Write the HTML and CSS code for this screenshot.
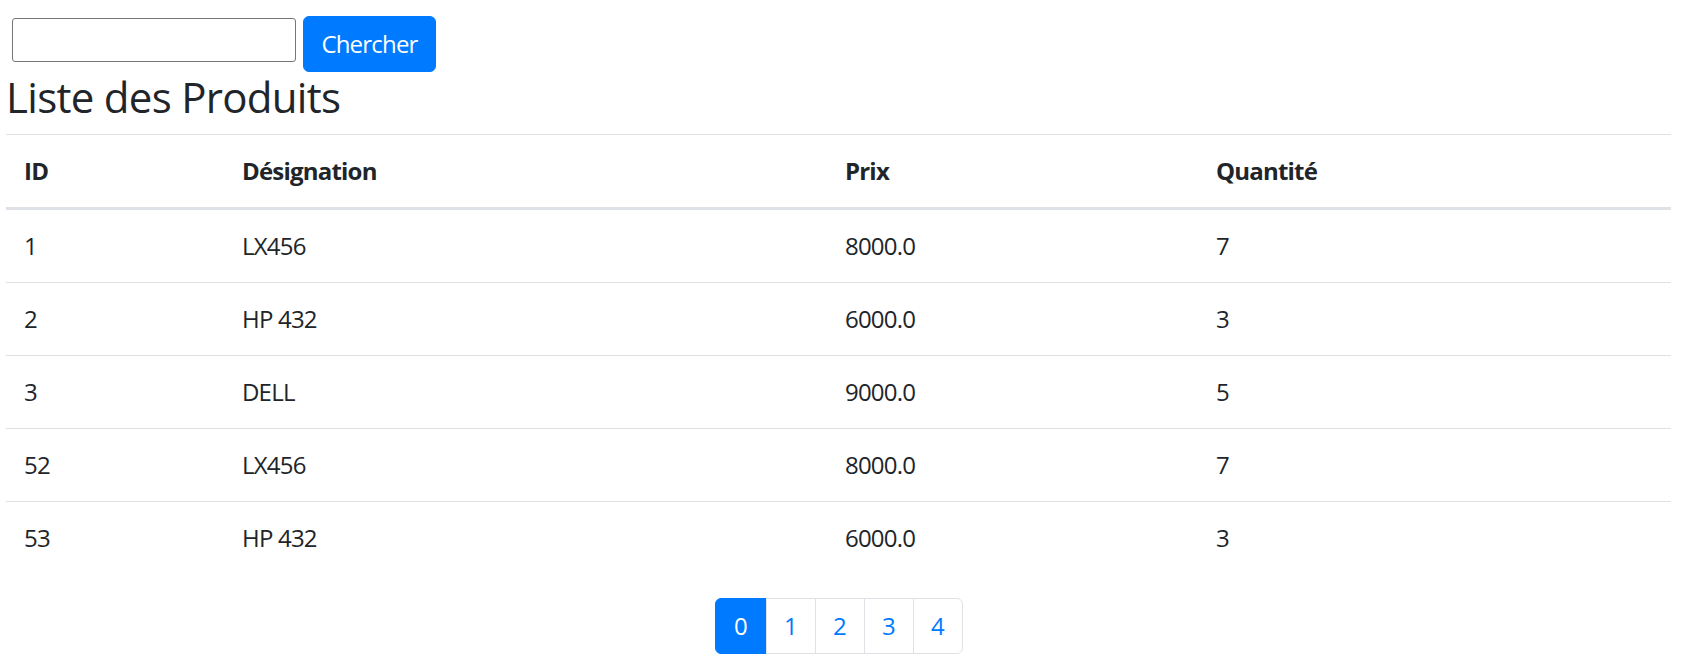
FILE: index.html
```html
<!DOCTYPE html>
<html lang="fr">
<head>
<meta charset="utf-8">
<title>Liste des Produits</title>
<link rel="stylesheet" href="styles.css">
</head>
<body>
<form class="search">
  <input type="text" class="search-input">
  <button type="button" class="btn-primary">Chercher</button>
</form>
<h3 class="title">Liste des Produits</h3>
<table class="table">
  <thead>
    <tr>
      <th class="c-id">ID</th>
      <th class="c-des">Désignation</th>
      <th class="c-prix">Prix</th>
      <th class="c-qte">Quantité</th>
    </tr>
  </thead>
  <tbody>
    <tr><td>1</td><td>LX456</td><td>8000.0</td><td>7</td></tr>
    <tr><td>2</td><td>HP 432</td><td>6000.0</td><td>3</td></tr>
    <tr><td>3</td><td>DELL</td><td>9000.0</td><td>5</td></tr>
    <tr><td>52</td><td>LX456</td><td>8000.0</td><td>7</td></tr>
    <tr><td>53</td><td>HP 432</td><td>6000.0</td><td>3</td></tr>
  </tbody>
</table>
<ul class="pagination">
  <li class="page-item active"><a class="page-link">0</a></li>
  <li class="page-item"><a class="page-link">1</a></li>
  <li class="page-item"><a class="page-link">2</a></li>
  <li class="page-item"><a class="page-link">3</a></li>
  <li class="page-item"><a class="page-link">4</a></li>
</ul>
</body>
</html>
```
FILE: styles.css
```css
* { box-sizing: border-box; }
html, body { margin: 0; padding: 0; background: #fff; }
body {
  font-family: "Open Sans", "Noto Sans", sans-serif;
  font-size: 24px;
  line-height: 1.5;
  color: #212529;
  padding: 0 10px 0 6px;
  letter-spacing: -0.8px;
}
.search {
  display: flex;
  align-items: flex-start;
  padding-top: 16px;
  margin: 0;
}
.search-input {
  margin: 2px 0 0 6px;
  width: 284px;
  height: 44px;
  border: 1.5px solid #767676;
  border-radius: 3px;
  font-size: 20px;
  padding: 2px 3px;
  background: #fff;
}
.btn-primary {
  margin-left: 7px;
  height: 56px;
  width: 133px;
  padding: 9px 12px;
  font-family: inherit;
  font-size: 24px;
  letter-spacing: -0.8px;
  line-height: 36px;
  color: #fff;
  background: #007bff;
  border: 1px solid #007bff;
  border-radius: 6px;
}
.title {
  margin: 0 0 12px;
  font-size: 42px;
  font-weight: 400;
  line-height: 1.2;
  letter-spacing: -0.7px;
}
.table {
  width: 1665px;
  border-collapse: collapse;
  margin-bottom: 24px;
  table-layout: fixed;
}
.table th, .table td {
  padding: 18px;
  text-align: left;
  vertical-align: top;
  border-top: 1px solid #dee2e6;
  line-height: 36px;
}
.table thead th {
  border-bottom: 3px solid #dee2e6;
  font-weight: 700;
}
.c-id { width: 218px; }
.c-des { width: 603px; }
.c-prix { width: 371px; }
.c-qte { width: 473px; }
.pagination {
  display: flex;
  justify-content: center;
  list-style: none;
  margin: 0;
  padding: 0;
  width: 1665px;
}
.page-link {
  display: block;
  width: 50px;
  text-align: center;
  padding: 12px 0;
  margin-left: -1px;
  line-height: 30px;
  color: #007bff;
  background: #fff;
  border: 1px solid #dee2e6;
  text-decoration: none;
}
.page-item:first-child .page-link {
  margin-left: 0;
  width: 52px;
  border-radius: 6px 0 0 6px;
}
.page-item:last-child .page-link {
  border-radius: 0 6px 6px 0;
}
.page-item.active .page-link {
  color: #fff;
  background: #007bff;
  border-color: #007bff;
}
```
